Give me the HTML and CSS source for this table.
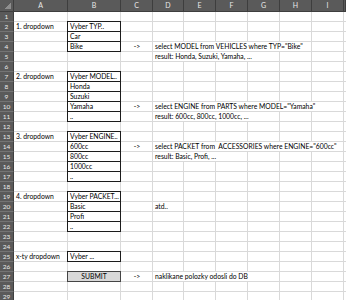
FILE: index.html
```html
<!DOCTYPE html>
<html>
<head>
<meta charset="utf-8">
<link rel="stylesheet" href="styles.css">
</head>
<body>
<div class="sheet">
  <div class="colhead">
    <div class="ch corner"></div>
    <div class="ch">A</div>
    <div class="ch">B</div>
    <div class="ch">C</div>
    <div class="ch">D</div>
    <div class="ch">E</div>
    <div class="ch">F</div>
    <div class="ch">G</div>
    <div class="ch">H</div>
    <div class="ch">I</div>
    <div class="ch"></div>
  </div>
  <div class="main">
    <div class="rownums">
      <div class="rn">1</div><div class="rn">2</div><div class="rn">3</div><div class="rn">4</div><div class="rn">5</div>
      <div class="rn">6</div><div class="rn">7</div><div class="rn">8</div><div class="rn">9</div><div class="rn">10</div>
      <div class="rn">11</div><div class="rn">12</div><div class="rn">13</div><div class="rn">14</div><div class="rn">15</div>
      <div class="rn">16</div><div class="rn">17</div><div class="rn">18</div><div class="rn">19</div><div class="rn">20</div>
      <div class="rn">21</div><div class="rn">22</div><div class="rn">23</div><div class="rn">24</div><div class="rn">25</div>
      <div class="rn">26</div><div class="rn">27</div><div class="rn">28</div><div class="rn">29</div>
    </div>
    <div class="cells">
      <div class="row"></div>
      <div class="row"><div class="a">1. dropdown</div><div class="b box">Vyber TYP..</div></div>
      <div class="row"><div class="b box">Car</div></div>
      <div class="row"><div class="b box">Bike</div><div class="c">-&gt;</div><div class="d">select MODEL from VEHICLES where TYP="Bike"</div></div>
      <div class="row"><div class="d">result: Honda, Suzuki, Yamaha, ...</div></div>
      <div class="row"></div>
      <div class="row"><div class="a">2. dropdown</div><div class="b box">Vyber MODEL..</div></div>
      <div class="row"><div class="b box">Honda</div></div>
      <div class="row"><div class="b box">Suzuki</div></div>
      <div class="row"><div class="b box">Yamaha</div><div class="c">-&gt;</div><div class="d">select ENGINE from PARTS where MODEL="Yamaha"</div></div>
      <div class="row"><div class="b box">..</div><div class="d">result: 600cc, 800cc, 1000cc, ...</div></div>
      <div class="row"></div>
      <div class="row"><div class="a">3. dropdown</div><div class="b box">Vyber ENGINE..</div></div>
      <div class="row"><div class="b box">600cc</div><div class="c">-&gt;</div><div class="d">select PACKET from  ACCESSORIES where ENGINE="600cc"</div></div>
      <div class="row"><div class="b box">800cc</div><div class="d">result: Basic, Profi, ...</div></div>
      <div class="row"><div class="b box">1000cc</div></div>
      <div class="row"><div class="b box">..</div></div>
      <div class="row"></div>
      <div class="row"><div class="a">4. dropdown</div><div class="b box">Vyber PACKET...</div></div>
      <div class="row"><div class="b box">Basic</div><div class="d">atd..</div></div>
      <div class="row"><div class="b box">Profi</div></div>
      <div class="row"><div class="b box">..</div></div>
      <div class="row"></div>
      <div class="row"></div>
      <div class="row"><div class="a">x-ty dropdown</div><div class="b box">Vyber ...</div></div>
      <div class="row"></div>
      <div class="row"><div class="b box submit">SUBMIT</div><div class="c">-&gt;</div><div class="d">naklikane polozky odosli do DB</div></div>
      <div class="row"></div>
      <div class="row"></div>
    </div>
  </div>
</div>
</body>
</html>
```

FILE: styles.css
```css
body {
  margin: 0;
  background: #fff;
  font-family: Lato, "Liberation Sans", sans-serif;
}

.sheet {
  width: 346px;
  height: 300px;
  overflow: hidden;
}

.colhead {
  display: grid;
  grid-template-columns: 14px 54px 53px 32px 31px 32px 32px 32px 32px 32px 1fr;
  height: 12px;
  background: #5a5a5a;
}

.ch {
  box-sizing: border-box;
  border-right: 1px solid #3e3e3e;
  border-bottom: 1px solid #3e3e3e;
  color: #e8e8e8;
  font-size: 7px;
  line-height: 11px;
  text-align: center;
}

.corner {
  background: linear-gradient(to bottom right, transparent 50%, #8e8e8e 50%) no-repeat;
  background-size: 6px 6px;
  background-position: right 2px bottom 2px;
}

.main {
  display: flex;
}

.rownums {
  flex: none;
  width: 14px;
  background: #5a5a5a;
}

.rn {
  box-sizing: border-box;
  height: 10px;
  border-bottom: 1px solid #747474;
  border-right: 1px solid #3e3e3e;
  color: #ececec;
  font-size: 6.5px;
  line-height: 9px;
  text-align: center;
}

.cells {
  flex: 1;
  background-image:
    linear-gradient(#d9d9d9, #d9d9d9),
    linear-gradient(#d9d9d9, #d9d9d9),
    linear-gradient(#d9d9d9, #d9d9d9),
    linear-gradient(#d9d9d9, #d9d9d9),
    linear-gradient(#d9d9d9, #d9d9d9),
    linear-gradient(#d9d9d9, #d9d9d9),
    linear-gradient(#d9d9d9, #d9d9d9),
    linear-gradient(#d9d9d9, #d9d9d9),
    linear-gradient(#d9d9d9, #d9d9d9),
    repeating-linear-gradient(to bottom, transparent 0 9px, #d9d9d9 9px 10px);
  background-size: 1px 100%, 1px 100%, 1px 100%, 1px 100%, 1px 100%, 1px 100%, 1px 100%, 1px 100%, 1px 100%, auto;
  background-position: 53px 0, 106px 0, 138px 0, 169px 0, 201px 0, 233px 0, 265px 0, 297px 0, 329px 0, 0 0;
  background-repeat: no-repeat, no-repeat, no-repeat, no-repeat, no-repeat, no-repeat, no-repeat, no-repeat, no-repeat, repeat;
}

.row {
  display: grid;
  grid-template-columns: 54px 53px 32px 31px 32px 32px 32px 32px 32px 1fr;
  height: 10px;
  font-size: 6.8px;
  line-height: 9px;
  color: #000;
  white-space: nowrap;
}

.a {
  grid-column: 1;
  padding-left: 2px;
}

.b {
  grid-column: 2;
  padding-left: 2px;
}

.box {
  box-sizing: border-box;
  margin: -1px 0 0 -1px;
  border: 1px solid #1c1c1c;
  background: #fff;
  padding-left: 2px;
}

.submit {
  background: #d9d9d9;
  border-color: #454545;
  text-align: center;
  padding-left: 0;
}

.c {
  grid-column: 3;
  text-align: center;
}

.d {
  grid-column: 4 / -1;
  justify-self: start;
  height: 9px;
  padding: 0 1px 0 2px;
  background: #fff;
  white-space: pre;
}
```
